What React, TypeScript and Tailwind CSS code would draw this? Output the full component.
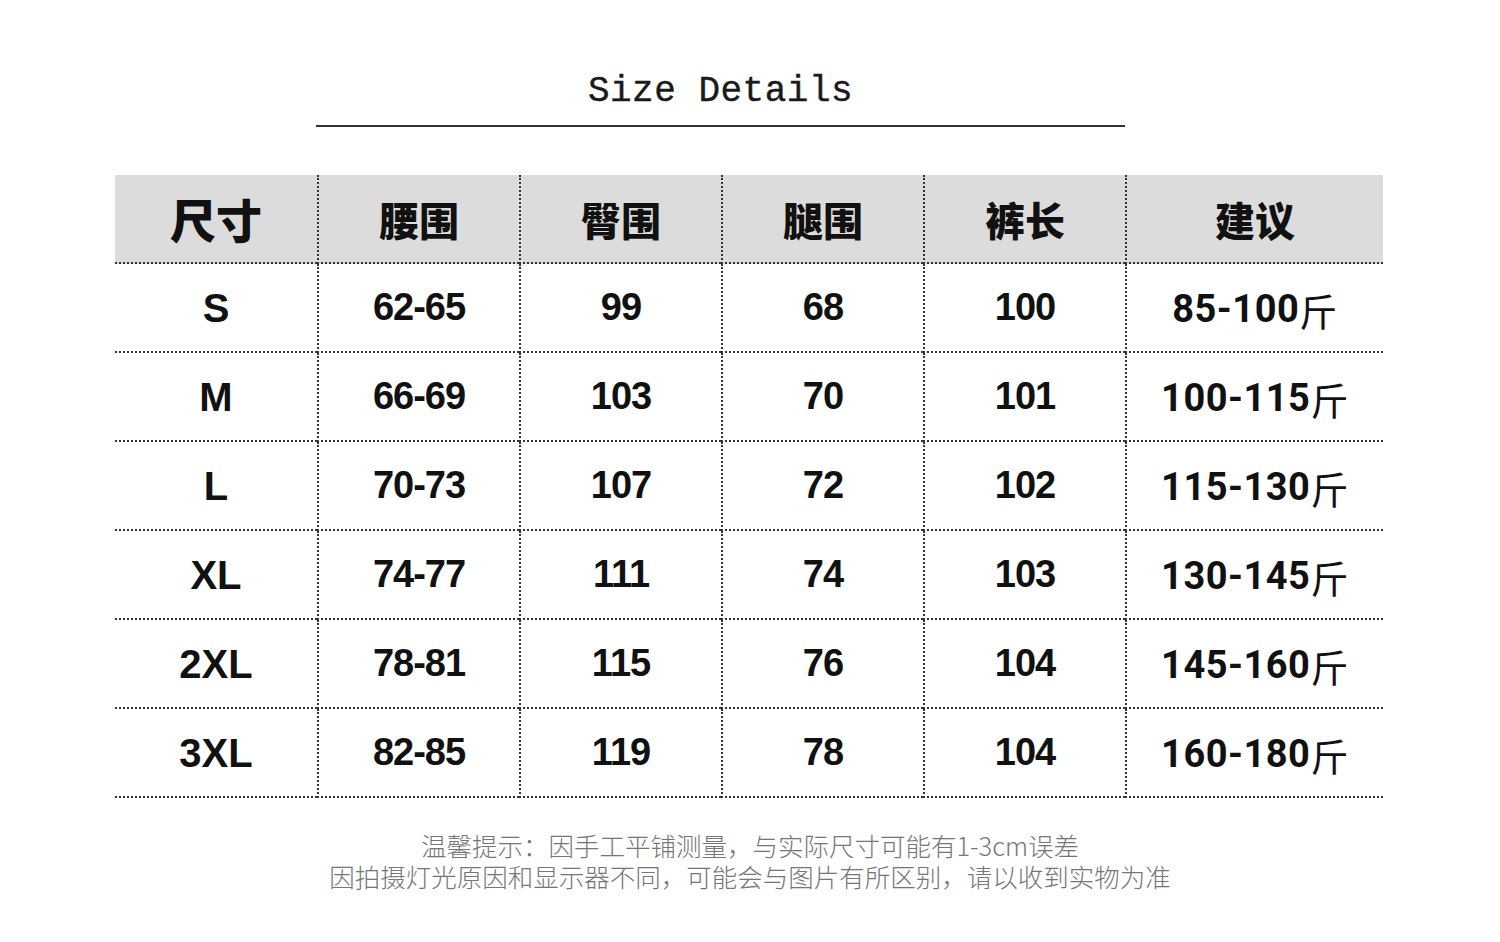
const headers = ['尺寸', '腰围', '臀围', '腿围', '裤长', '建议'];

const rows: [string, string, string, string, string, string][] = [
  ['S', '62-65', '99', '68', '100', '85-100'],
  ['M', '66-69', '103', '70', '101', '100-115'],
  ['L', '70-73', '107', '72', '102', '115-130'],
  ['XL', '74-77', '111', '74', '103', '130-145'],
  ['2XL', '78-81', '115', '76', '104', '145-160'],
  ['3XL', '82-85', '119', '78', '104', '160-180'],
];

const cols = 'grid grid-cols-[202px_202px_202px_202px_202px_258px]';

export default function App() {
  return (
    <div className="w-[1500px] h-[942px] bg-white flex flex-col text-[#111]">
      {/* title */}
      <div className="ml-[316px] w-[809px] pt-[72px] flex flex-col items-center">
        <h1 className="font-['Liberation_Mono',monospace] text-[36px] leading-[40px] tracking-[0.5px] text-[#1a1a1a] [-webkit-text-stroke:0.4px_#1a1a1a]">
          Size Details
        </h1>
        <div className="mt-[13px] w-full h-[2px] bg-[#333]" />
      </div>

      {/* table */}
      <div className="ml-[115px] mt-[48px] w-[1268px]">
        <div className={`${cols} h-[89px] bg-[#dcdcdc]`}>
          {headers.map((h, i) => (
            <div
              key={h}
              className={`flex items-center justify-center border-b-2 border-dotted border-[#333] font-['Noto_Sans_CJK_SC',sans-serif] font-black ${
                i === 0 ? 'text-[46px]' : 'text-[40px] border-l-2'
              }`}
            >
              {h}
            </div>
          ))}
        </div>
        {rows.map((r) => (
          <div key={r[0]} className={`${cols} h-[89px]`}>
            {r.map((v, i) => (
              <div
                key={i}
                className={`flex items-center justify-center border-b-2 border-dotted border-[#333] ${
                  i > 0 ? 'border-l-2' : ''
                } ${
                  i === 5
                    ? "pt-[3px] font-['Roboto',sans-serif] font-bold text-[38px] tracking-[0.5px]"
                    : i === 0
                    ? "font-['Liberation_Sans',sans-serif] font-bold text-[40px]"
                    : "font-['Liberation_Sans',sans-serif] font-bold text-[38px] tracking-[-1px]"
                }`}
              >
                {v}
                {i === 5 && (
                  <span className="font-['Noto_Sans_CJK_SC',sans-serif] font-normal">斤</span>
                )}
              </div>
            ))}
          </div>
        ))}
      </div>

      {/* notes */}
      <div className="mt-[31px] flex flex-col items-center font-['Noto_Sans_CJK_SC',sans-serif] font-light text-[25.5px] leading-[31px] text-[#767676]">
        <p>温馨提示：因手工平铺测量，与实际尺寸可能有1-3cm误差</p>
        <p>因拍摄灯光原因和显示器不同，可能会与图片有所区别，请以收到实物为准</p>
      </div>
    </div>
  );
}
